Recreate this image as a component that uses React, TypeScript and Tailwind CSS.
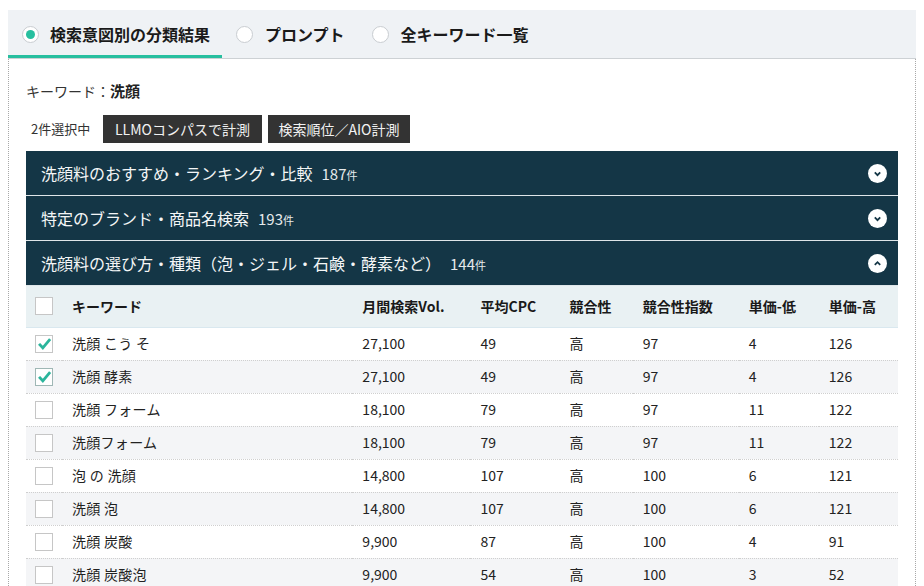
import React from "react";

const FONT = "font-['Noto_Sans_CJK_JP','Noto_Sans',sans-serif]";

type Row = {
  keyword: string;
  vol: string;
  cpc: string;
  level: string;
  index: string;
  low: string;
  high: string;
  checked?: boolean;
};

const rows: Row[] = [
  { keyword: "洗顔 こう そ", vol: "27,100", cpc: "49", level: "高", index: "97", low: "4", high: "126", checked: true },
  { keyword: "洗顔 酵素", vol: "27,100", cpc: "49", level: "高", index: "97", low: "4", high: "126", checked: true },
  { keyword: "洗顔 フォーム", vol: "18,100", cpc: "79", level: "高", index: "97", low: "11", high: "122" },
  { keyword: "洗顔フォーム", vol: "18,100", cpc: "79", level: "高", index: "97", low: "11", high: "122" },
  { keyword: "泡 の 洗顔", vol: "14,800", cpc: "107", level: "高", index: "100", low: "6", high: "121" },
  { keyword: "洗顔 泡", vol: "14,800", cpc: "107", level: "高", index: "100", low: "6", high: "121" },
  { keyword: "洗顔 炭酸", vol: "9,900", cpc: "87", level: "高", index: "100", low: "4", high: "91" },
  { keyword: "洗顔 炭酸泡", vol: "9,900", cpc: "54", level: "高", index: "100", low: "3", high: "52" },
];

const groups = [
  { title: "洗顔料のおすすめ・ランキング・比較", count: 187, open: false },
  { title: "特定のブランド・商品名検索", count: 193, open: false },
  { title: "洗顔料の選び方・種類（泡・ジェル・石鹸・酵素など）", count: 144, open: true },
];

function Radio({ active }: { active?: boolean }) {
  return (
    <span className="flex h-[17px] w-[17px] items-center justify-center rounded-full border border-[#c9cdd1] bg-white">
      {active ? <span className="h-[9px] w-[9px] rounded-full bg-[#27bf9f]" /> : null}
    </span>
  );
}

function Checkbox({ checked, focused }: { checked?: boolean; focused?: boolean }) {
  return (
    <span
      className={`flex h-[18px] w-[18px] items-center justify-center border bg-white ${
        focused ? "border-[#9fb7b5]" : "border-[#c6c6c6]"
      }`}
    >
      {checked ? (
        <svg viewBox="0 0 16 16" className="h-[15px] w-[15px]">
          <path d="M2.2 8.4 L6.2 12.6 L14 3.4" fill="none" stroke="#2bb59c" strokeWidth="3" />
        </svg>
      ) : null}
    </span>
  );
}

function Chevron({ up }: { up?: boolean }) {
  return (
    <span className="flex h-[19px] w-[19px] items-center justify-center rounded-full bg-white">
      <svg viewBox="0 0 10 10" className="h-[9px] w-[9px]">
        <path
          d={up ? "M2 6.5 L5 3.5 L8 6.5" : "M2 3.8 L5 6.8 L8 3.8"}
          fill="none"
          stroke="#143646"
          strokeWidth="2"
        />
      </svg>
    </span>
  );
}

export default function App() {
  const headers = ["キーワード", "月間検索Vol.", "平均CPC", "競合性", "競合性指数", "単価-低", "単価-高"];

  return (
    <div className={`${FONT} min-h-[586px] bg-white px-[8px] pt-[10px] text-[#222]`}>
      <div className="flex h-[49px] border-b border-[#cdd1d4] bg-[#eff2f5]">
        <div className="flex w-[214px] items-center gap-[11px] border-b-[3px] border-[#27bf9f] pl-[14px] pt-[3px]">
          <Radio active />
          <span className="text-[16px] font-bold text-[#1a1a1a]">検索意図別の分類結果</span>
        </div>
        <div className="flex items-center gap-[12px] pl-[14px]">
          <Radio />
          <span className="text-[16px] font-bold text-[#1a1a1a]">プロンプト</span>
        </div>
        <div className="flex items-center gap-[12px] pl-[27px]">
          <Radio />
          <span className="text-[16px] font-bold text-[#1a1a1a]">全キーワード一覧</span>
        </div>
      </div>

      <div className="border-x border-dotted border-[#a8a8a8] px-[17px] pt-[21px]">
        <div className="flex items-center text-[14px] leading-[22px]">
          <span className="text-[#333]">キーワード：</span>
          <span className="font-bold text-[15px]">洗顔</span>
        </div>

        <div className="mt-[13px] flex items-center">
          <span className="w-[77px] shrink-0 pl-[5px] text-[13px] text-[#333]">2件選択中</span>
          <button className="h-[28px] w-[159px] shrink-0 bg-[#333] text-[14px] text-[#f2f2f2]">LLMOコンパスで計測</button>
          <button className="ml-[6px] h-[28px] w-[142px] shrink-0 bg-[#333] text-[14px] text-[#f2f2f2]">検索順位／AIO計測</button>
        </div>

        <div className="mt-[8px]">
          {groups.map((group) => (
            <div
              key={group.title}
              className="flex h-[45px] items-center justify-between border-b border-[#dfe6e9] bg-[#143646] pl-[15px] pr-[11px] last:h-[44px] last:border-b-0"
            >
              <div className="flex items-baseline text-[16px] text-[#f4f6f7]">
                <span>{group.title}</span>
                <span className="ml-[9px] text-[15px] text-[#e6eaec]">{group.count}</span>
                <span className="text-[11px] text-[#e6eaec]">件</span>
              </div>
              <Chevron up={group.open} />
            </div>
          ))}

          <table className="w-full table-fixed border-collapse text-[14px]">
            <colgroup>
              <col className="w-[36px]" />
              <col className="w-[290px]" />
              <col className="w-[118px]" />
              <col className="w-[89px]" />
              <col className="w-[73px]" />
              <col className="w-[106px]" />
              <col className="w-[80px]" />
              <col className="w-[79px]" />
            </colgroup>
            <thead>
              <tr className="h-[41px] border-b border-[#d9e8ef] bg-[#e9f1f3]">
                <th className="pl-[9px] text-left">
                  <Checkbox />
                </th>
                {headers.map((h) => (
                  <th key={h} className="pl-[10px] text-left font-bold text-[#1a1a1a]">
                    {h}
                  </th>
                ))}
              </tr>
            </thead>
            <tbody>
              {rows.map((row, i) => (
                <tr
                  key={row.keyword}
                  className={`h-[33px] border-b border-dotted border-[#cfcfcf] ${i % 2 === 1 ? "bg-[#f4f5f7]" : "bg-white"}`}
                >
                  <td className="pl-[9px]">
                    <Checkbox checked={row.checked} focused={i === 1} />
                  </td>
                  <td className="pl-[10px] tracking-[0.02em]">{row.keyword}</td>
                  <td className="pl-[10px]">{row.vol}</td>
                  <td className="pl-[10px]">{row.cpc}</td>
                  <td className="pl-[10px]">{row.level}</td>
                  <td className="pl-[10px]">{row.index}</td>
                  <td className="pl-[10px]">{row.low}</td>
                  <td className="pl-[10px]">{row.high}</td>
                </tr>
              ))}
            </tbody>
          </table>
        </div>
      </div>
    </div>
  );
}
